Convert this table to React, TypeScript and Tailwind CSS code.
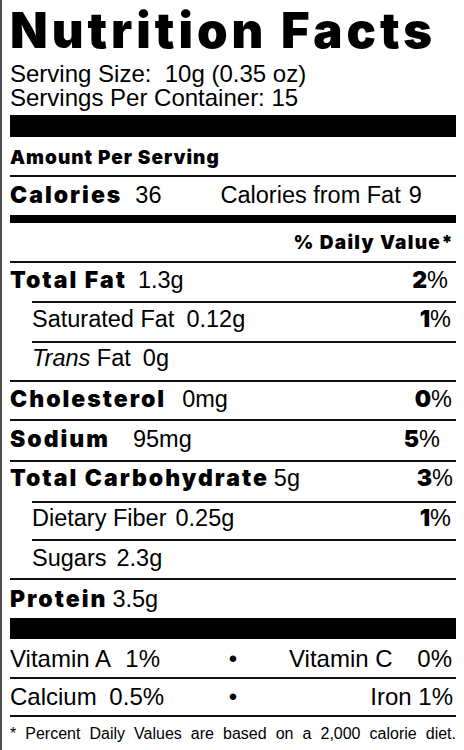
const heavy = "font-['Inter',sans-serif] font-black";
const plain = "font-['Liberation_Sans',Arial,sans-serif] font-normal";

type Row = {
  label: React.ReactNode;
  bold?: boolean;
  value: string;
  gap: string;
  pct?: string;
  pr?: string;
  indent?: boolean;
  box: string;
};

const rows: Row[] = [
  { label: 'Total Fat', bold: true, value: '1.3g', gap: 'ml-[11px]', pct: '2', pr: 'pr-[8px]', box: 'h-[40px] pt-[6px]' },
  { label: 'Saturated Fat', value: '0.12g', gap: 'ml-[12px]', pct: '1', pr: 'pr-[5px]', indent: true, box: 'h-[40px] pt-[5px]' },
  {
    label: (
      <>
        <span className="italic">Trans</span> Fat
      </>
    ),
    value: '0g',
    gap: 'ml-[12px]',
    indent: true,
    box: 'h-[39px] pt-[4px]',
  },
  { label: 'Cholesterol', bold: true, value: '0mg', gap: 'ml-[16px]', pct: '0', pr: 'pr-[4px]', box: 'h-[39px] pt-[6px]' },
  { label: 'Sodium', bold: true, value: '95mg', gap: 'ml-[23px]', pct: '5', pr: 'pr-[16px]', box: 'h-[41px] pt-[7px]' },
  { label: 'Total Carbohydrate', bold: true, value: '5g', gap: 'ml-[5px]', pct: '3', pr: 'pr-[3px]', box: 'h-[41px] pt-[5px]' },
  { label: 'Dietary Fiber', value: '0.25g', gap: 'ml-[9px]', pct: '1', pr: 'pr-[5px]', indent: true, box: 'h-[38px] pt-[4px]' },
  { label: 'Sugars', value: '2.3g', gap: 'ml-[10px]', indent: true, box: 'h-[39px] pt-[6px]' },
  { label: 'Protein', bold: true, value: '3.5g', gap: 'ml-[5px]', box: 'h-[40px] pt-[8px]' },
];

const NutrientRow = ({ row }: { row: Row }) => (
  <div className={row.indent ? 'pl-[22px]' : ''}>
    <div className={`flex items-baseline border-t-2 border-[#111] leading-[23px] ${row.box}`}>
      <span className={row.bold ? `${heavy} text-[23px] tracking-[2px]` : `${plain} text-[23.5px]`}>{row.label}</span>
      <span className={`${plain} text-[23.5px] ${row.gap}`}>{row.value}</span>
      {row.pct && (
        <span className={`ml-auto ${row.pr}`}>
          <span className={`${heavy} text-[23px]`}>{row.pct}</span>
          <span className={`${plain} text-[23.5px]`}>%</span>
        </span>
      )}
    </div>
  </div>
);

export default function App() {
  return (
    <div className="w-[464px] h-[750px] bg-white text-black border-l-2 border-[#505050] pl-[8px] pr-[8px] overflow-hidden">
      <div className={`${heavy} text-[49px] leading-[49px] tracking-[4px] pt-[6px] whitespace-nowrap`}>Nutrition Facts</div>
      <div className={`${plain} text-[24px] leading-[24px] mt-[7px]`}>
        <div>Serving Size:&nbsp; 10g (0.35 oz)</div>
        <div>Servings Per Container: 15</div>
      </div>
      <div className="h-[22px] bg-black mt-[5px]" />

      <div className={`${heavy} text-[19px] leading-[19px] tracking-[1px] h-[38px] pt-[11px]`}>Amount Per Serving</div>
      <div className="flex items-baseline border-t-2 border-[#111] h-[40px] pt-[7px] leading-[23px]">
        <span className={`${heavy} text-[23px] tracking-[2px]`}>Calories</span>
        <span className={`${plain} text-[23.5px] ml-[13px]`}>36</span>
        <span className={`${plain} text-[23.5px] ml-[59px]`}>Calories from Fat</span>
        <span className={`${plain} text-[23.5px] ml-[8px]`}>9</span>
      </div>
      <div className="h-[8px] bg-black" />
      <div className={`${heavy} text-[19px] leading-[19px] tracking-[1.3px] h-[38px] pt-[10px] pr-[2px] text-right`}>
        % Daily Value*
      </div>

      {rows.map((row, i) => (
        <NutrientRow key={i} row={row} />
      ))}

      <div className="h-[21px] bg-black" />
      <div className={`${plain} text-[24px] leading-[23px]`}>
        <div className="grid grid-cols-[1fr_auto_1fr] items-baseline h-[40px] pt-[8px] border-b-2 border-[#111]">
          <div>
            Vitamin A <span className="ml-[9px]">1%</span>
          </div>
          <div className="px-2">•</div>
          <div className="text-right pr-[4px]">
            Vitamin C <span className="ml-[18px]">0%</span>
          </div>
        </div>
        <div className="grid grid-cols-[1fr_auto_1fr] items-baseline h-[38px] pt-[6px] border-b-2 border-[#111]">
          <div>
            Calcium <span className="ml-[6px]">0.5%</span>
          </div>
          <div className="px-2">•</div>
          <div className="text-right pr-[3px]">Iron 1%</div>
        </div>
      </div>
      <div className={`${plain} text-[16px] leading-[16px] pt-[9px] text-justify [text-align-last:justify]`}>
        * Percent Daily Values are based on a 2,000 calorie diet.
      </div>
    </div>
  );
}
